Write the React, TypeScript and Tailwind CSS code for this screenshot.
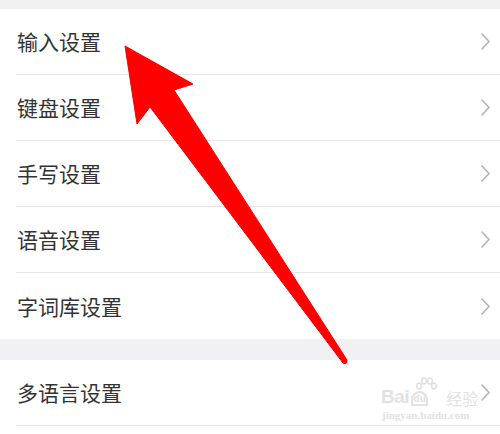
const groupOne = ["输入设置", "键盘设置", "手写设置", "语音设置", "字词库设置"];
const groupTwo = ["多语言设置"];

const Chevron = () => (
  <svg width="9" height="17" viewBox="0 0 9 17" className="shrink-0">
    <path
      d="M1 1 L8 8.5 L1 16"
      fill="none"
      stroke="#b4b4b8"
      strokeWidth="1.6"
      strokeLinecap="round"
      strokeLinejoin="round"
    />
  </svg>
);

const Row = ({ title, last }: { title: string; last?: boolean }) => (
  <div className="pl-4 bg-white">
    <div
      className={`h-[66px] flex items-center justify-between pr-[10px] ${
        last ? "" : "border-b border-[#e6e6e8]"
      }`}
    >
      <span className="pl-px text-[21px] text-[#333333] leading-none">{title}</span>
      <Chevron />
    </div>
  </div>
);

// faint "Baidu 经验" stamp in the corner
const Watermark = () => (
  <div className="absolute left-[381px] top-[377px] flex flex-col gap-[4px] pointer-events-none select-none text-[#e2e2e2]">
    <div className="flex items-end">
      <span className="text-[19px] leading-none font-bold tracking-tight font-['Liberation_Sans',sans-serif]">
        Bai
      </span>
      <div className="flex flex-col items-start ml-[2px]">
        <svg width="22" height="14" viewBox="0 0 22 14" className="ml-[4px]">
          <g fill="none" stroke="#dedede" strokeWidth="1.4">
            <ellipse cx="4" cy="9" rx="2.3" ry="3" />
            <ellipse cx="9" cy="4" rx="2.3" ry="3" />
            <ellipse cx="15" cy="4" rx="2.3" ry="3" />
            <ellipse cx="19" cy="9" rx="2.3" ry="3" />
          </g>
        </svg>
        <span className="w-[17px] h-[15px] rounded-t-full rounded-b-md border-2 border-[#e2e2e2] text-[10px] leading-[11px] font-bold text-center font-['Liberation_Sans',sans-serif]">
          du
        </span>
      </div>
      <span className="ml-[9px] text-[16px] leading-none font-['Noto_Sans_CJK_SC',sans-serif]">
        经验
      </span>
    </div>
    <span className="pl-px text-[11px] leading-none font-bold font-['Liberation_Serif',serif]">
      jingyan.baidu.com
    </span>
  </div>
);

export default function App() {
  return (
    <div className="relative w-[500px] h-[434px] overflow-hidden bg-[#f1f1f4] font-['Noto_Sans_CJK_SC','Noto_Sans',sans-serif]">
      <div className="h-[9px]" />
      <div>
        {groupOne.map((t, i) => (
          <Row key={t} title={t} last={i === groupOne.length - 1} />
        ))}
      </div>
      <div className="h-[21px]" />
      <div className="bg-white pb-[8px]">
        {groupTwo.map((t) => (
          <Row key={t} title={t} />
        ))}
      </div>

      <svg
        className="absolute inset-0 pointer-events-none"
        width="500"
        height="434"
        viewBox="0 0 500 434"
      >
        <path
          d="M125 46 L193 84 L174 90 L347 360 Q347 365 343 363 L150 107 L137 124 Z"
          fill="#ff0000"
          stroke="#ff0000"
          strokeWidth="1"
          strokeLinejoin="round"
        />
      </svg>

      <Watermark />
    </div>
  );
}
